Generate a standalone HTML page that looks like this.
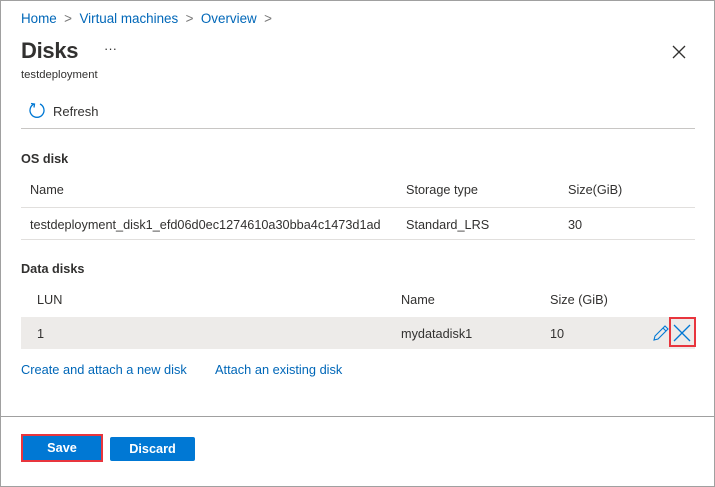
<!DOCTYPE html><html><head><style>
*{margin:0;padding:0;box-sizing:border-box}
body{width:715px;height:487px;position:relative;background:#fff;font-family:"Liberation Sans",sans-serif;color:#323130;font-size:12.7px;overflow:hidden}
.b{position:absolute;border:1px solid #a0a0a0;left:0;top:0;width:715px;height:487px}
.a{position:absolute;white-space:nowrap}
.l{color:#0067b8}
.h{font-weight:bold}
.ln{position:absolute;height:1px;background:#e1dfdd}
</style></head><body>
<div class="b"></div>
<div class="a l" style="left:21px;top:11px;font-size:13.4px">Home <span style="color:#777">&nbsp;&gt;&nbsp;</span> Virtual machines <span style="color:#777">&nbsp;&gt;&nbsp;</span> Overview <span style="color:#777">&nbsp;&gt;</span></div>
<div class="a" style="left:21px;top:38px;font-size:22px;font-weight:bold;letter-spacing:-0.3px">Disks</div>
<div class="a" style="left:104px;top:41px;font-size:13px">···</div>
<svg class="a" style="left:672px;top:45px" width="14" height="14"><path d="M1 1L13 13M13 1L1 13" stroke="#323130" stroke-width="1.3"/></svg>
<div class="a" style="left:21px;top:69px;font-size:11.3px">testdeployment</div>
<svg class="a" style="left:28px;top:101px" width="18" height="18"><path d="M6 3A7 7 0 1 0 12 3" fill="none" stroke="#0078d4" stroke-width="1.3"/><path d="M3 2.5L6.5 3L6 6.5" fill="none" stroke="#0078d4" stroke-width="1.3"/></svg>
<div class="a" style="left:53px;top:104px;font-size:13px">Refresh</div>
<div class="ln" style="left:21px;top:128px;width:674px;background:#c8c6c4"></div>
<div class="a h" style="left:21px;top:152px">OS disk</div>
<div class="a" style="left:30px;top:183px">Name</div>
<div class="a" style="left:406px;top:183px">Storage type</div>
<div class="a" style="left:568px;top:183px">Size(GiB)</div>
<div class="ln" style="left:21px;top:207px;width:674px"></div>
<div class="a" style="left:30px;top:218px">testdeployment_disk1_efd06d0ec1274610a30bba4c1473d1ad</div>
<div class="a" style="left:406px;top:218px">Standard_LRS</div>
<div class="a" style="left:568px;top:218px">30</div>
<div class="ln" style="left:21px;top:239px;width:674px"></div>
<div class="a h" style="left:21px;top:262px">Data disks</div>
<div class="a" style="left:37px;top:293px">LUN</div>
<div class="a" style="left:401px;top:293px">Name</div>
<div class="a" style="left:550px;top:293px">Size (GiB)</div>
<div class="a" style="left:21px;top:317px;width:674px;height:32px;background:#edebe9"></div>
<div class="a" style="left:37px;top:327px">1</div>
<div class="a" style="left:401px;top:327px">mydatadisk1</div>
<div class="a" style="left:550px;top:327px">10</div>
<svg class="a" style="left:652px;top:324px" width="18" height="18"><path d="M2 16L3 12L13 2L16 5L6 15Z M11 4L14 7" fill="none" stroke="#0078d4" stroke-width="1.1"/></svg>
<div class="a" style="left:669px;top:317px;width:27px;height:30px;border:2px solid #e8353d"></div>
<svg class="a" style="left:673px;top:324px" width="18" height="18"><path d="M1 1L17 17M17 1L1 17" stroke="#0078d4" stroke-width="1.3"/></svg>
<div class="a l" style="left:21px;top:362px;font-size:12.8px">Create and attach a new disk</div>
<div class="a l" style="left:215px;top:362px;font-size:12.8px">Attach an existing disk</div>
<div class="ln" style="left:0;top:416px;width:715px;background:#a0a0a0"></div>
<div class="a" style="left:21px;top:434px;width:82px;height:28px;border:2px solid #e8353d;background:#0078d4"></div>
<div class="a h" style="left:21px;top:441px;width:82px;text-align:center;color:#fff">Save</div>
<div class="a" style="left:110px;top:437px;width:85px;height:24px;background:#0078d4;border-radius:2px;color:#fff;font-weight:bold;text-align:center;line-height:24px">Discard</div>
</body></html>
